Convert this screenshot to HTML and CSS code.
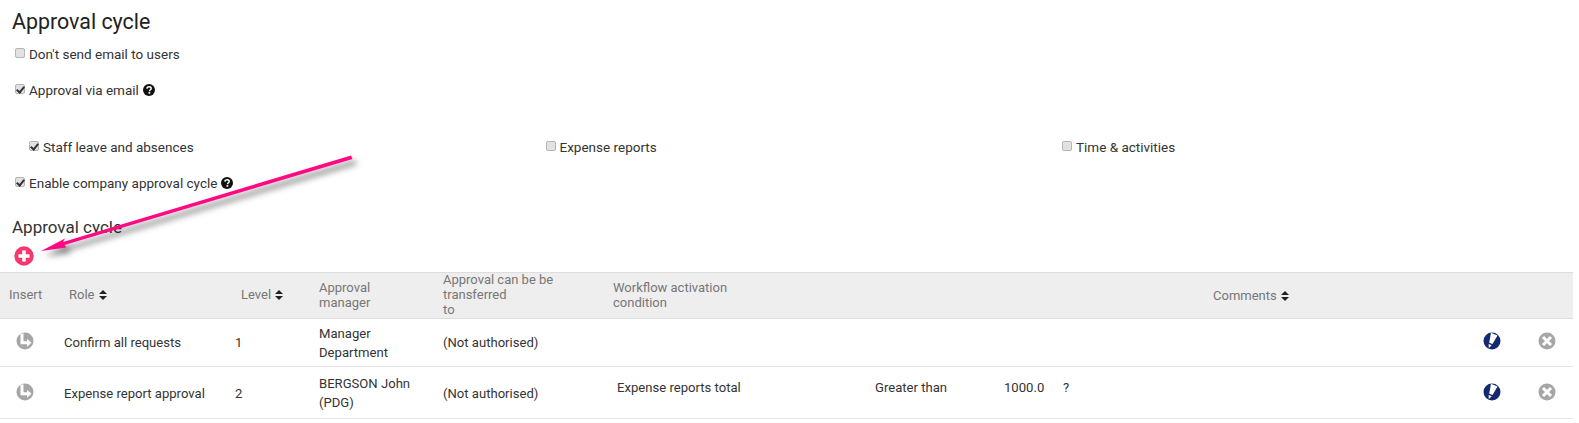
FILE: index.html
```html
<!DOCTYPE html>
<html lang="en">
<head>
<meta charset="utf-8">
<title>Approval cycle</title>
<link rel="stylesheet" href="styles.css">
</head>
<body>
<svg width="0" height="0" class="defs">
  <symbol id="help" viewBox="0 0 12 12"><circle cx="6" cy="6" r="6" fill="#111"/><path d="M3.900 4.600C4 3.300 5 2.700 6.100 2.700 7.400 2.700 8.200 3.500 8.200 4.400 8.200 5.700 6.500 5.800 6.500 7.200" fill="none" stroke="#fff" stroke-width="1.500"/><rect x="5.500" y="8.100" width="1.800" height="1.600" fill="#fff"/></symbol>
  <symbol id="sort" viewBox="0 0 8 10"><path d="M4 0 8 4H0ZM0 6H8L4 10Z" fill="#222"/></symbol>
  <symbol id="insert" viewBox="0 0 18 18"><circle cx="9" cy="9" r="8.500" fill="#a6a6a6"/><path d="M4.500 1.500H7.500V9.300H11V6.800L15.500 10.800 11 14.800V12.300H4.500Z" fill="#fff"/></symbol>
  <symbol id="edit" viewBox="0 0 18 18"><circle cx="9" cy="9" r="8.500" fill="#14296f"/><path d="M8 .8 14.500 3.500 9.500 12 6.200 10.800Z" fill="#fff"/><path d="M5.600 12 8.700 13.300 5.800 16Z" fill="#fff"/></symbol>
  <symbol id="delete" viewBox="0 0 18 18"><circle cx="9" cy="9" r="8.500" fill="#a6a6a6"/><path d="M5 5 13 13M13 5 5 13" stroke="#fff" stroke-width="3"/></symbol>
  <symbol id="plus" viewBox="0 0 20 20"><circle cx="10" cy="10" r="9.700" fill="#f5386f"/><path d="M10 4.500V15.500M4.500 10H15.500" stroke="#fff" stroke-width="3.600"/></symbol>
</svg>

<main class="page">
  <h1 class="title">Approval cycle</h1>

  <label class="option option-first"><input type="checkbox"><span>Don't send email to users</span></label>
  <label class="option option-email"><input type="checkbox" checked><span>Approval via email</span><svg class="help"><use href="#help"/></svg></label>

  <div class="modules">
    <label class="option"><input type="checkbox" checked><span>Staff leave and absences</span></label>
    <label class="option"><input type="checkbox"><span>Expense reports</span></label>
    <label class="option"><input type="checkbox"><span>Time &amp; activities</span></label>
  </div>

  <label class="option option-company"><input type="checkbox" checked><span>Enable company approval cycle</span><svg class="help"><use href="#help"/></svg></label>

  <h2 class="subtitle">Approval cycle</h2>
  <button class="add" type="button" aria-label="Add"><svg class="add-icon"><use href="#plus"/></svg></button>

  <table class="cycle">
    <colgroup>
      <col class="c-insert"><col class="c-role"><col class="c-level"><col class="c-manager"><col class="c-transfer"><col class="c-field"><col class="c-op"><col class="c-value"><col class="c-note"><col class="c-rest"><col class="c-action"><col class="c-action-last">
    </colgroup>
    <thead>
      <tr>
        <th class="th-insert"><span class="th-label">Insert</span></th>
        <th class="th-sort"><span class="th-label">Role <svg class="sort"><use href="#sort"/></svg></span></th>
        <th class="th-sort"><span class="th-label">Level <svg class="sort"><use href="#sort"/></svg></span></th>
        <th class="th-manager"><span class="th-label">Approval manager</span></th>
        <th class="th-transfer"><span class="th-label">Approval can be be transferred<br>to</span></th>
        <th colspan="4"><span class="th-label th-condition">Workflow activation condition</span></th>
        <th>Comments <svg class="sort"><use href="#sort"/></svg></th>
        <th></th>
        <th></th>
      </tr>
    </thead>
    <tbody>
      <tr class="row-short">
        <td class="icon-cell icon-insert"><svg class="row-icon"><use href="#insert"/></svg></td>
        <td>Confirm all requests</td>
        <td>1</td>
        <td class="manager">Manager Department</td>
        <td>(Not authorised)</td>
        <td></td><td></td><td></td><td></td><td></td>
        <td class="icon-cell"><svg class="row-icon"><use href="#edit"/></svg></td>
        <td class="icon-cell"><svg class="row-icon"><use href="#delete"/></svg></td>
      </tr>
      <tr class="row-tall">
        <td class="icon-cell icon-insert"><svg class="row-icon"><use href="#insert"/></svg></td>
        <td class="text">Expense report approval</td>
        <td class="text">2</td>
        <td class="manager">BERGSON John (PDG)</td>
        <td class="text">(Not authorised)</td>
        <td class="cond cond-field">Expense reports total</td>
        <td class="cond">Greater than</td>
        <td class="cond">1000.0</td>
        <td class="cond">?</td>
        <td></td>
        <td class="icon-cell"><svg class="row-icon"><use href="#edit"/></svg></td>
        <td class="icon-cell"><svg class="row-icon"><use href="#delete"/></svg></td>
      </tr>
    </tbody>
  </table>

  <svg class="arrow" width="400" height="150" viewBox="0 0 400 150" aria-hidden="true">
    <path d="M41 101 65 88.500 63 92 351 5.500 352.500 9 64.500 95 66.500 97.500Z" fill="#ff0a82"/>
  </svg>
</main>
</body>
</html>
```

FILE: styles.css
```css
* { box-sizing: border-box; }

html, body { margin: 0; background: #fff; }

body {
  font-family: Roboto, "Noto Sans", sans-serif;
  font-size: 13px;
  color: #333;
  overflow: hidden;
}

.defs { position: absolute; }

.page {
  position: relative;
  width: 1579px;
  height: 423px;
}

.title {
  margin: 0;
  padding: 8px 0 0 12px;
  font-size: 21.400px;
  line-height: 27px;
  font-weight: 400;
  color: #222;
}

.option {
  display: flex;
  align-items: center;
  gap: 4px;
  height: 18px;
  line-height: 18px;
  font-size: 13.500px;
  color: #333;
}

.option input {
  appearance: none;
  position: relative;
  flex: none;
  width: 10px;
  height: 10px;
  margin: 0 0 2px;
  border: 1px solid #b5b5b5;
  border-radius: 2px;
  background: #e2e2e2;
}

.option input:checked::after {
  content: "";
  position: absolute;
  left: 2px;
  top: 0;
  width: 3px;
  height: 6px;
  border: solid #333;
  border-width: 0 2px 2px 0;
  transform: rotate(40deg);
}

.option-first, .option-email, .option-company { margin-left: 15px; }

.option-first { margin-top: 10px; }
.option-email { margin-top: 18px; }
.option-company { margin-top: 18px; }

.help {
  width: 12px;
  height: 12px;
}

.modules {
  display: grid;
  grid-template-columns: repeat(3, 516.500px);
  margin: 39px 0 0 29px;
}

.subtitle {
  margin: 25px 0 0 12px;
  font-size: 17px;
  line-height: 20px;
  font-weight: 400;
  color: #333;
}

.add {
  display: block;
  width: 20px;
  height: 20px;
  margin: 9px 0 6px 14px;
  padding: 0;
  border: 0;
  background: none;
}

.add-icon {
  display: block;
  width: 20px;
  height: 20px;
}

.cycle {
  width: 1573px;
  table-layout: fixed;
  border-collapse: collapse;
}

.c-insert { width: 58px; }
.c-role { width: 171px; }
.c-level { width: 84px; }
.c-manager { width: 124px; }
.c-transfer { width: 170px; }
.c-field { width: 262px; }
.c-op { width: 129px; }
.c-value { width: 59px; }
.c-note { width: 150px; }
.c-rest { width: 258px; }
.c-action { width: 54px; }
.c-action-last { width: 54px; }

.cycle th {
  height: 46px;
  padding: 0 6px;
  background: #eee;
  border-top: 1px solid #ddd;
  border-bottom: 1px solid #ddd;
  font-size: 13px;
  line-height: 15px;
  font-weight: 400;
  text-align: left;
  color: #777;
}

.th-label {
  display: block;
  margin-top: -2px;
}

.cycle .th-insert { padding-left: 9px; }
.cycle .th-sort { padding-left: 11px; }
.cycle .th-sort + .th-sort { padding-left: 12px; }
.cycle .th-manager { padding-right: 30px; }
.cycle .th-transfer { padding-right: 40px; }

.th-condition { width: 130px; }

.sort {
  width: 8px;
  height: 10px;
  margin-left: 1px;
  vertical-align: -1px;
}

.cycle td {
  height: 48px;
  padding: 0 6px;
  border-bottom: 1px solid #e6e6e6;
  font-size: 13.100px;
  line-height: 19px;
  color: #333;
}

.cycle .row-tall td { height: 52px; }

.cycle .manager { padding-right: 20px; }

.cycle .text { padding-top: 2px; }
.cycle .cond { padding-bottom: 10px; }
.cycle .cond-field { padding-left: 10px; }

.cycle .icon-cell {
  padding: 0 0 3px;
  text-align: center;
}

.cycle .row-short .icon-cell { padding-bottom: 5px; }
.cycle .icon-cell:last-child { padding-left: 2px; }
.cycle .icon-insert,
.cycle .row-short .icon-insert { padding-right: 8px; }

.row-icon {
  display: inline-block;
  width: 18px;
  height: 18px;
  vertical-align: middle;
}

.arrow {
  position: absolute;
  left: 0;
  top: 150px;
  filter: drop-shadow(4px 5px 3px rgba(0, 0, 0, .55));
  pointer-events: none;
}
```
